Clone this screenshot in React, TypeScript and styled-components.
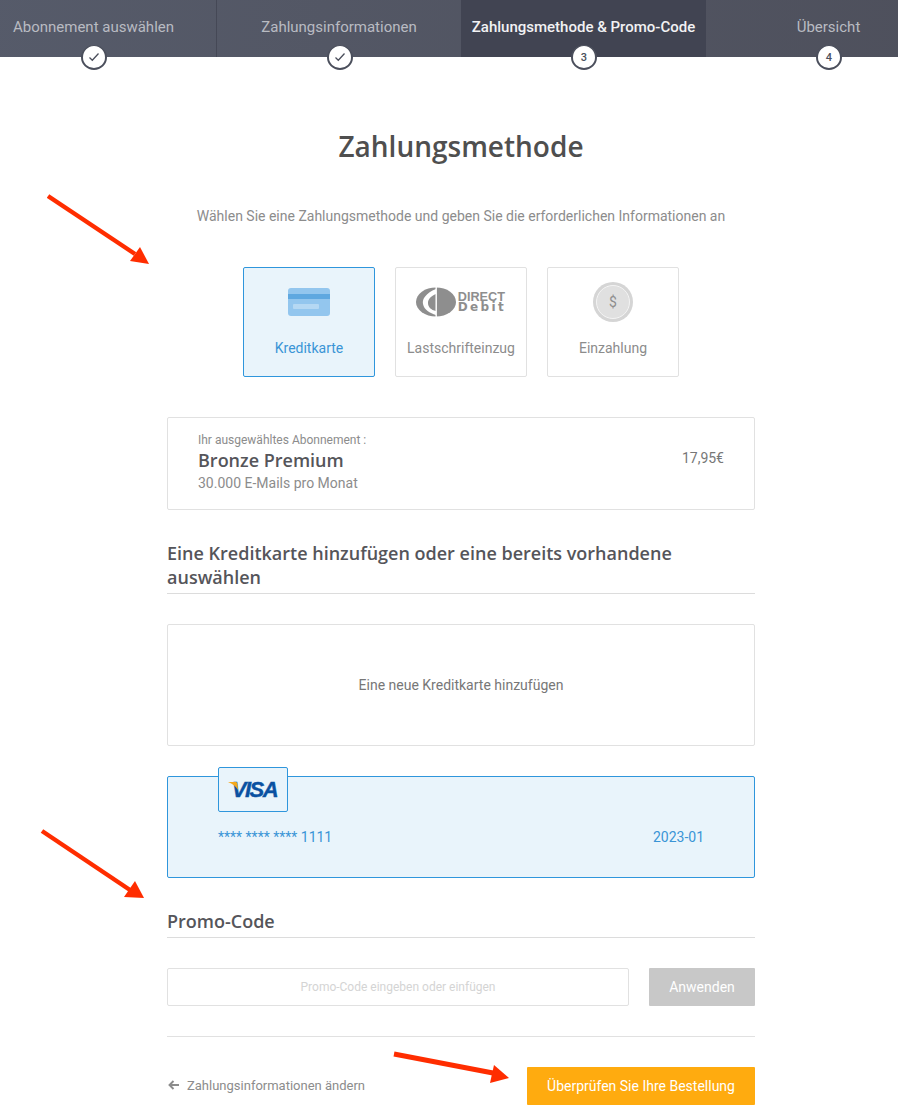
import styled, { createGlobalStyle } from "styled-components";

const GlobalStyle = createGlobalStyle`
  html, body {
    margin: 0;
    padding: 0;
    background: #fff;
    font-family: Roboto, "Liberation Sans", sans-serif;
    color: #8c8c8c;
  }
`;

const steps = [
  { label: "Abonnement auswählen", done: true },
  { label: "Zahlungsinformationen", done: true },
  { label: "Zahlungsmethode & Promo-Code", active: true, badge: "3" },
  { label: "Übersicht", badge: "4" },
];

const CheckIcon = () => (
  <svg width="12" height="10" viewBox="0 0 12 10" fill="none">
    <path d="M1.5 5.5 L4.3 8.2 L10.5 1.5" stroke="#4b4f5c" strokeWidth="1.3" />
  </svg>
);

const CardIcon = () => (
  <svg width="42" height="28" viewBox="0 0 42 28">
    <rect width="42" height="28" rx="3" fill="#93c6ee" />
    <rect y="6" width="42" height="5" fill="#5fa8e0" />
    <rect x="5" y="16" width="26" height="5" rx="1" fill="#b5d8f3" />
  </svg>
);

const DebitMark = () => (
  <svg width="40" height="30" viewBox="0 0 40 30">
    <ellipse cx="20" cy="15" rx="20" ry="14.5" fill="#8e8e8e" />
    <path d="M20 2 C10 6 6 12 7 17 C8 23 14 26 20 28 L20 24 C15 23 12 20 12 16 C12 12 15 9 20 7 Z" fill="#fff" />
    <rect x="19.5" y="0" width="1.4" height="30" fill="#fff" />
  </svg>
);

const CoinIcon = () => (
  <svg width="40" height="40" viewBox="0 0 40 40">
    <circle cx="20" cy="20" r="20" fill="#d5d5d5" />
    <circle cx="20" cy="20" r="16.5" fill="#e0e0e0" stroke="#f4f4f4" strokeWidth="1" />
  </svg>
);

const VisaWing = () => (
  <svg width="10" height="8" viewBox="0 0 10 8">
    <path d="M0 0 H7.5 C8.6 0 9.2 0.6 9.4 1.6 L10 8 C8 4.5 4.5 1.5 0 0 Z" fill="#f4a81d" />
  </svg>
);

const BackIcon = () => (
  <svg width="11" height="10" viewBox="0 0 11 10" fill="none">
    <path d="M11 5 H2 M5.5 1 L1.5 5 L5.5 9" stroke="#8c8c8c" strokeWidth="1.9" />
  </svg>
);

export default function App() {
  return (
    <>
      <GlobalStyle />
      <Viewport>
        <Frame>
          <StepBar>
            {steps.map((step) => (
              <Step key={step.label} $active={step.active}>
                <StepLabel $active={step.active}>{step.label}</StepLabel>
                <StepBadge>{step.done ? <CheckIcon /> : step.badge}</StepBadge>
              </Step>
            ))}
          </StepBar>

          <Content>
            <Title>Zahlungsmethode</Title>
            <Subtitle>
              Wählen Sie eine Zahlungsmethode und geben Sie die erforderlichen
              Informationen an
            </Subtitle>

            <Methods>
              <Method $selected>
                <MethodIcon>
                  <CardIcon />
                </MethodIcon>
                <MethodLabel>Kreditkarte</MethodLabel>
              </Method>
              <Method>
                <MethodIcon>
                  <DebitLogo>
                    <DebitMark />
                    <DebitText>
                      <DebitTop>DIRECT</DebitTop>
                      <DebitWord>Debit</DebitWord>
                    </DebitText>
                  </DebitLogo>
                </MethodIcon>
                <MethodLabel>Lastschrifteinzug</MethodLabel>
              </Method>
              <Method>
                <MethodIcon>
                  <Coin>
                    <CoinIcon />
                    <CoinSign>$</CoinSign>
                  </Coin>
                </MethodIcon>
                <MethodLabel>Einzahlung</MethodLabel>
              </Method>
            </Methods>

            <PlanCard>
              <div>
                <PlanHint>Ihr ausgewähltes Abonnement :</PlanHint>
                <PlanName>Bronze Premium</PlanName>
                <PlanDetail>30.000 E-Mails pro Monat</PlanDetail>
              </div>
              <PlanPrice>17,95€</PlanPrice>
            </PlanCard>

            <SectionHeading>
              Eine Kreditkarte hinzufügen oder eine bereits vorhandene auswählen
            </SectionHeading>

            <AddCard>Eine neue Kreditkarte hinzufügen</AddCard>

            <SavedCard>
              <VisaTab>
                <VisaWingSlot>
                  <VisaWing />
                </VisaWingSlot>
                <VisaWord>VISA</VisaWord>
              </VisaTab>
              <SavedCardRow>
                <span>**** **** **** 1111</span>
                <span>2023-01</span>
              </SavedCardRow>
            </SavedCard>

            <PromoHeading>Promo-Code</PromoHeading>
            <PromoRow>
              <PromoInput placeholder="Promo-Code eingeben oder einfügen" />
              <ApplyButton>Anwenden</ApplyButton>
            </PromoRow>

            <Footer>
              <BackLink>
                <BackIcon />
                Zahlungsinformationen ändern
              </BackLink>
              <ReviewButton>Überprüfen Sie Ihre Bestellung</ReviewButton>
            </Footer>
          </Content>

          <Arrow $left={76} $top={194} width="104" height="72" viewBox="0 0 104 72">
            <path d="M1 2 L88 60" stroke="#ff2d00" strokeWidth="4.5" />
            <path d="M102 70 L83 67 L93 53 Z" fill="#ff2d00" />
          </Arrow>
          <Arrow $left={69} $top={828} width="106" height="72" viewBox="0 0 106 72">
            <path d="M2 3 L90 62" stroke="#ff2d00" strokeWidth="4.5" />
            <path d="M104 70 L84 69 L95 53 Z" fill="#ff2d00" />
          </Arrow>
          <Arrow $left={422} $top={1050} width="118" height="36" viewBox="0 0 118 36">
            <path d="M1 4 L100 23" stroke="#ff2d00" strokeWidth="5" />
            <path d="M116 28 L101 15 L97 33 Z" fill="#ff2d00" />
          </Arrow>
        </Frame>
      </Viewport>
    </>
  );
}

//styled

const Viewport = styled.div`
  width: 898px;
  height: 1115px;
  overflow: hidden;
`;

/* the original page is wider than the window and scrolled sideways by 29px */
const Frame = styled.div`
  position: relative;
  width: 980px;
  margin-left: -29px;
`;

const StepBar = styled.div`
  display: flex;
  height: 57px;
  background: linear-gradient(90deg, #565b6a 0%, #4e505c 100%);
`;

const Step = styled.div<{ $active?: boolean }>`
  position: relative;
  flex: 0 0 245px;
  box-sizing: border-box;
  padding-top: 18px;
  text-align: center;
  background: ${(p) => (p.$active ? "#414452" : "transparent")};

  &:nth-child(2) {
    border-left: 1px solid #454856;
  }
`;

const StepLabel = styled.div<{ $active?: boolean }>`
  font-size: 15px;
  line-height: 18px;
  font-weight: ${(p) => (p.$active ? 500 : 400)};
  color: ${(p) => (p.$active ? "#f2f2f4" : "#b9bbc2")};
`;

const StepBadge = styled.div`
  position: absolute;
  left: 50%;
  top: 45px;
  width: 22px;
  height: 22px;
  margin-left: -12.5px;
  display: flex;
  align-items: center;
  justify-content: center;
  border: 2px solid #4b4f5c;
  border-top-width: 1px;
  border-radius: 50%;
  background: #fff;
  font-size: 11px;
  font-weight: 500;
  color: #4b4f5c;
`;

const Content = styled.main`
  width: 588px;
  margin: 0 auto;
`;

const Title = styled.h1`
  margin: 72px 0 0;
  font-family: "Open Sans", sans-serif;
  font-size: 28px;
  line-height: 35px;
  font-weight: 600;
  text-align: center;
  color: #4f4f4f;
`;

const Subtitle = styled.p`
  margin: 42px 0 0;
  font-size: 14px;
  line-height: 20px;
  text-align: center;
  white-space: nowrap;
  color: #8c8c8c;
`;

const Methods = styled.div`
  display: flex;
  justify-content: center;
  gap: 20px;
  margin-top: 41px;
`;

const Method = styled.div<{ $selected?: boolean }>`
  box-sizing: border-box;
  width: 132px;
  height: 110px;
  padding-top: 13px;
  border: 1px solid ${(p) => (p.$selected ? "#2f96dc" : "#e1e1e1")};
  border-radius: 2px;
  text-align: center;
  background: ${(p) => (p.$selected ? "#e9f4fb" : "#fff")};
  color: ${(p) => (p.$selected ? "#3a94d6" : "#8c8c8c")};
`;

const MethodIcon = styled.div`
  height: 42px;
  display: flex;
  align-items: center;
  justify-content: center;
`;

const MethodLabel = styled.div`
  margin-top: 15px;
  font-size: 14px;
  line-height: 20px;
`;

const DebitLogo = styled.div`
  display: flex;
  align-items: center;
  gap: 2px;
`;

const DebitText = styled.div`
  display: flex;
  flex-direction: column;
  color: #8e8e8e;
  text-align: left;
`;

const DebitTop = styled.span`
  font-family: "Liberation Sans", sans-serif;
  font-size: 12.7px;
  line-height: 10px;
  font-weight: 700;
`;

const DebitWord = styled.span`
  font-family: "DejaVu Sans", sans-serif;
  font-size: 12px;
  line-height: 10px;
  font-weight: 700;
  letter-spacing: 2.4px;
`;

const Coin = styled.div`
  position: relative;
  width: 40px;
  height: 40px;
`;

const CoinSign = styled.span`
  position: absolute;
  inset: 0;
  display: flex;
  align-items: center;
  justify-content: center;
  font-size: 14px;
  color: #8e8e8e;
`;

const PlanCard = styled.div`
  box-sizing: border-box;
  height: 93px;
  margin-top: 40px;
  padding: 15px 30px 0;
  display: flex;
  justify-content: space-between;
  border: 1px solid #e1e1e1;
  border-radius: 2px;
`;

const PlanHint = styled.div`
  font-size: 12px;
  line-height: 14px;
  color: #8c8c8c;
`;

const PlanName = styled.div`
  margin-top: 1px;
  font-family: "Open Sans", sans-serif;
  font-size: 18px;
  line-height: 24px;
  font-weight: 600;
  color: #55555a;
`;

const PlanDetail = styled.div`
  margin-top: 2px;
  font-size: 14px;
  line-height: 18px;
  color: #8c8c8c;
`;

const PlanPrice = styled.div`
  margin-top: 16px;
  font-size: 14px;
  line-height: 18px;
  color: #777;
`;

const SectionHeading = styled.h2`
  margin: 31px 0 0;
  padding-bottom: 4px;
  border-bottom: 1px solid #dcdcdc;
  font-family: "Open Sans", sans-serif;
  font-size: 18px;
  line-height: 24px;
  font-weight: 600;
  color: #55555a;
`;

const AddCard = styled.div`
  box-sizing: border-box;
  height: 122px;
  margin-top: 30px;
  display: flex;
  align-items: center;
  justify-content: center;
  border: 1px solid #e1e1e1;
  border-radius: 2px;
  font-size: 14px;
  color: #777;
`;

const SavedCard = styled.div`
  position: relative;
  box-sizing: border-box;
  height: 102px;
  margin-top: 30px;
  padding: 0 50px;
  display: flex;
  flex-direction: column;
  border: 1px solid #2f96dc;
  border-radius: 2px;
  background: #e9f4fb;
`;

const VisaTab = styled.div`
  position: absolute;
  left: 50px;
  top: -10px;
  box-sizing: border-box;
  width: 70px;
  height: 45px;
  display: flex;
  align-items: center;
  justify-content: center;
  border: 1px solid #2f96dc;
  border-radius: 2px;
  background: #e9f4fb;
`;

const VisaWingSlot = styled.div`
  position: absolute;
  left: 9px;
  top: 14px;
  line-height: 0;
`;

const VisaWord = styled.span`
  margin-left: 3px;
  font-family: "Liberation Sans", sans-serif;
  font-size: 22px;
  font-weight: 700;
  font-style: italic;
  letter-spacing: -1.5px;
  color: #0a51a1;
  -webkit-text-stroke: 0.4px #0a51a1;
`;

const SavedCardRow = styled.div`
  margin-top: 51px;
  display: flex;
  justify-content: space-between;
  font-size: 14px;
  line-height: 18px;
  color: #3a94d6;
`;

const PromoHeading = styled.h2`
  margin: 31px 0 0;
  padding-bottom: 4px;
  border-bottom: 1px solid #dcdcdc;
  font-family: "Open Sans", sans-serif;
  font-size: 18px;
  line-height: 24px;
  font-weight: 600;
  color: #55555a;
`;

const PromoRow = styled.div`
  display: flex;
  gap: 20px;
  margin-top: 30px;
`;

const PromoInput = styled.input`
  box-sizing: border-box;
  flex: 1;
  height: 38px;
  padding: 0 10px;
  border: 1px solid #e1e1e1;
  border-radius: 2px;
  outline: none;
  font-family: Roboto, sans-serif;
  font-size: 12px;
  text-align: center;

  &::placeholder {
    color: #d4d4d4;
    opacity: 1;
  }
`;

const ApplyButton = styled.button`
  width: 106px;
  height: 38px;
  border: 0;
  border-radius: 1px;
  background: #c8c8c8;
  color: #fff;
  font-family: Roboto, sans-serif;
  font-size: 14px;
`;

const Footer = styled.div`
  margin-top: 30px;
  padding-top: 30px;
  display: flex;
  align-items: center;
  justify-content: space-between;
  border-top: 1px solid #e1e1e1;
`;

const BackLink = styled.a`
  display: flex;
  align-items: center;
  gap: 8px;
  padding: 0 0 2px 1px;
  font-size: 13px;
  color: #8c8c8c;
`;

const ReviewButton = styled.button`
  width: 228px;
  height: 38px;
  border: 0;
  border-radius: 1px;
  background: #ffab0f;
  color: #fff;
  font-family: Roboto, sans-serif;
  font-size: 14px;
`;

const Arrow = styled.svg<{ $left: number; $top: number }>`
  position: absolute;
  left: ${(p) => p.$left}px;
  top: ${(p) => p.$top}px;
`;
